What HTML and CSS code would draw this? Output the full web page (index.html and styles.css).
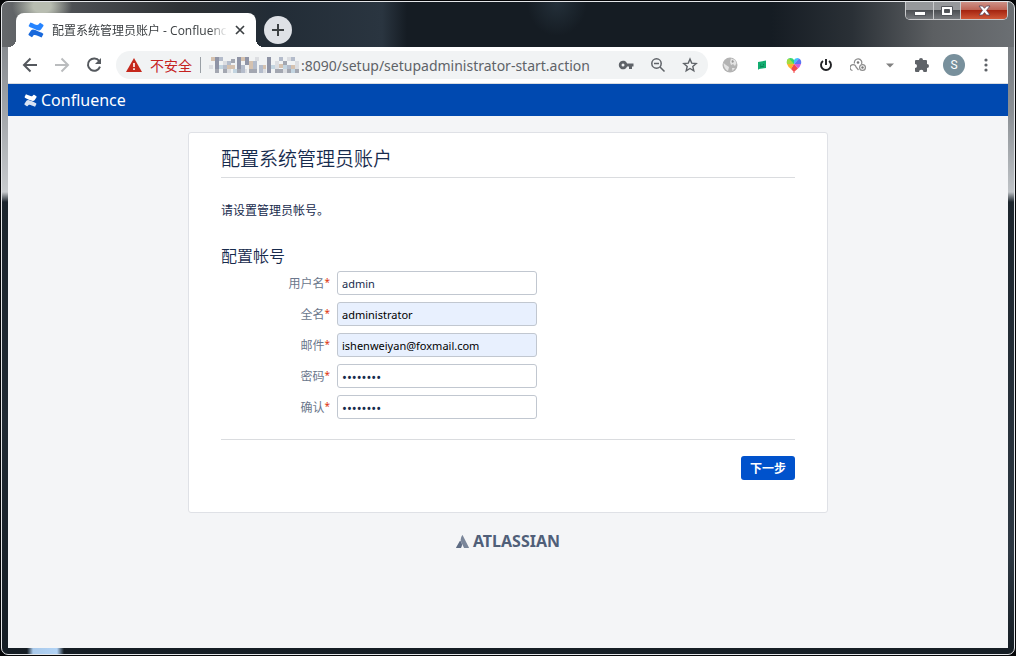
FILE: index.html
```html
<!DOCTYPE html>
<html lang="zh-CN">
<head>
<meta charset="utf-8">
<title>配置系统管理员账户 - Confluence</title>
<link rel="stylesheet" href="styles.css">
</head>
<body>
<div class="window">
  <header class="tabstrip">
    <div class="tab">
      <svg class="tab-icon" width="16" height="16" viewBox="0 0 16 16"><path fill="#1868db" d="M.6 12 3 8.400C5 6.500 7 8 12.500 10.300Q15.800 11.600 15.300 12.300L13.600 15.600C8.500 13.800 6.500 11.500 4.500 14.700Q4.100 15.400 3.500 15L.8 13.200Q.2 12.700.6 12Z"/><path fill="#2684ff" d="M15.400 4 13 7.600C11 9.500 9 8 3.500 5.700Q.2 4.400.7 3.700L2.400.4C7.500 2.200 9.500 4.500 11.500 1.300Q11.900.6 12.500 1L15.200 2.800Q15.800 3.300 15.400 4Z"/></svg>
      <span class="tab-title">配置系统管理员账户 - Confluence</span>
      <button class="tab-close" aria-label="关闭标签页"><svg width="10" height="10" viewBox="0 0 10 10"><path d="M1 1 9 9M9 1 1 9" stroke="#3c4043" stroke-width="1.700"/></svg></button>
    </div>
    <button class="new-tab" aria-label="新标签页"><svg width="12" height="12" viewBox="0 0 12 12"><path d="M6 0V12M0 6H12" stroke="#3c4043" stroke-width="2"/></svg></button>
    <div class="window-buttons">
      <button class="win-btn win-min" aria-label="最小化"><svg width="12" height="10" viewBox="0 0 12 10"><rect x=".5" y="5.500" width="11" height="4" fill="#fff" stroke="#53565c"/></svg></button>
      <button class="win-btn win-max" aria-label="最大化"><svg width="12" height="10" viewBox="0 0 12 10"><path fill="#fff" stroke="#53565c" fill-rule="evenodd" d="M.5.5H11.500V9.500H.5ZM3.500 3.500V6.500H8.500V3.500Z"/></svg></button>
      <button class="win-btn win-close" aria-label="关闭"><svg width="13" height="11" viewBox="0 0 13 11"><path fill="#fff" stroke="#53465c" stroke-width=".8" d="M1 1H4.500L6.500 3.300 8.500 1H12L8.500 5.400 12 10H8.500L6.500 7.600 4.500 10H1L4.500 5.400Z"/></svg></button>
    </div>
  </header>

  <nav class="toolbar">
    <div class="nav-buttons">
      <button class="icon-btn" aria-label="后退"><svg width="16" height="16" viewBox="0 0 16 16"><path d="M15 8H2M8.500 1.500 2 8 8.500 14.500" fill="none" stroke="#55595e" stroke-width="2"/></svg></button>
      <button class="icon-btn" aria-label="前进"><svg width="16" height="16" viewBox="0 0 16 16"><path d="M1 8H14M7.500 1.500 14 8 7.500 14.500" fill="none" stroke="#babcbe" stroke-width="2"/></svg></button>
      <button class="icon-btn" aria-label="重新加载"><svg width="16" height="16" viewBox="0 0 16 16"><path d="M13.200 4A6.200 6.200 0 1 0 14 9.700" fill="none" stroke="#55595e" stroke-width="2"/><path d="M15 1V7H9Z" fill="#55595e"/></svg></button>
    </div>
    <div class="omnibox">
      <svg class="warn" width="16" height="14" viewBox="0 0 16 14"><path d="M8 0 16 14H0Z" fill="#c5281c"/><path d="M7.200 5H8.800V9H7.200ZM7.200 10.300H8.800V12H7.200Z" fill="#fff"/></svg>
      <span class="insecure">不安全</span>
      <span class="separator"></span>
      <svg class="mosaic" width="92" height="18" viewBox="0 0 92 18" shape-rendering="crispEdges">
        <path fill="#dcdee2" d="M0 9h4v4H0zM14 5h4v4h-4zM18 13h4v4h-4zM34 13h4v4h-4zM46 1h4v4h-4zM54 13h3v4h-3zM66 5h4v8h-4zM78 1h4v4h-4zM74 13h4v4h-4zM86 5h4v8h-4z"/>
        <path fill="#8f94a6" d="M6 1h4v12H6zM28 1h4v12h-4zM36 1h4v8h-4zM58 1h4v16h-4z"/>
        <path fill="#b4bccb" d="M10 1h4v4h-4zM14 9h4v4h-4zM18 5h4v4h-4zM32 9h4v8h-4zM44 5h4v8h-4zM50 9h4v8h-4zM70 1h4v4h-4zM78 9h4v4h-4zM82 1h4v4h-4z"/>
        <path fill="#d5c2b0" d="M2 1h4v4H2zM18 9h8v4h-8zM32 1h4v4h-4zM40 5h4v8h-4zM54 9h3v4h-3zM70 8h4v4h-4zM82 9h4v4h-4z"/>
        <path fill="#a3a7b1" d="M6 13h4v4H6zM14 13h4v4h-4zM22 3h4v4h-4zM28 13h4v4h-4zM40 13h8v4h-8zM66 13h8v4h-8zM74 5h4v4h-4zM78 13h4v4h-4zM86 13h4v4h-4z"/>
        <path fill="#c3d5e1" d="M10 9h4v4h-4zM24 13h4v4h-4zM62 9h4v4h-4zM74 9h4v4h-4zM82 13h4v4h-4z"/>
      </svg>
      <input class="url" type="text" aria-label="地址" value=":8090/setup/setupadministrator-start.action">
      <div class="omni-icons">
        <button class="icon-btn" aria-label="密码"><svg width="16" height="16" viewBox="0 0 16 16"><path fill="#5f6368" fill-rule="evenodd" d="M9.100 6.500A4.300 4.300 0 1 0 9.100 9.500H11V12H14V9.500H15.500V6.500ZM5 6.500A1.500 1.500 0 1 1 5 9.500 1.500 1.500 0 0 1 5 6.500Z"/></svg></button>
        <button class="icon-btn" aria-label="缩放"><svg width="16" height="16" viewBox="0 0 16 16"><circle cx="6.500" cy="6.500" r="4.700" fill="none" stroke="#5f6368" stroke-width="1.500"/><path d="M10 10 14.500 14.500M4 6.500H9" stroke="#5f6368" stroke-width="1.500"/></svg></button>
        <button class="icon-btn" aria-label="加入书签"><svg width="16" height="16" viewBox="0 0 16 16"><path d="M8 2 9.700 6.100 14.200 6.500 10.800 9.400 11.800 13.800 8 11.500 4.200 13.800 5.200 9.400 1.800 6.500 6.300 6.100Z" fill="none" stroke="#5f6368" stroke-width="1.400"/></svg></button>
      </div>
    </div>
    <div class="extensions">
      <button class="icon-btn" aria-label="代理"><svg width="16" height="16" viewBox="0 0 16 16"><circle cx="8" cy="8" r="7.500" fill="#b3b3b3"/><path fill="#e4e4e4" d="M9 1.500 13 3 14.500 6 13 9 11 7 9 8 8 5ZM1.500 6 4 8 7 10 6 14Q2 12 1.500 6ZM10 11 13 11 10.500 14Z"/><path fill="#979797" d="M10 3 12 4 11 6 9.500 5Z"/></svg></button>
      <button class="icon-btn" aria-label="扩展"><svg width="16" height="16" viewBox="0 0 16 16"><path fill="#12ad70" d="M4 5 12 3.500V11L5 12 4 13Z"/><path stroke="#087f50" d="M6 8H7M9 7.500H10M6 10 10 9"/></svg></button>
      <button class="icon-btn" aria-label="颜色"><svg width="16" height="16" viewBox="0 0 16 16"><path fill="#39d66b" d="M8 7 1 7Q0 1 4.500 1 7 1 8 3Z"/><path fill="#3ec3ff" d="M8 7V3Q9 1 12 1L13 1.500Z"/><path fill="#5a75f4" d="M8 7 13 1.500Q16 3 15 7Z"/><path fill="#d461d7" d="M8 7H15Q14 10 12 11.500Z"/><path fill="#ffb22b" d="M8 7H1Q2 10 5 12Z"/><path fill="#a6dc3f" d="M8 7 3 1.500Q0 3 1 7Z"/><path fill="#f34b4b" d="M8 7 5 12 7.500 14.500V16H8.500V14.500L12 11.500Z"/></svg></button>
      <button class="icon-btn" aria-label="开关"><svg width="16" height="16" viewBox="0 0 16 16"><path d="M5 4A5 5 0 1 0 11 4M8 2V8" fill="none" stroke="#202124" stroke-width="1.900"/></svg></button>
      <button class="icon-btn" aria-label="链接"><svg width="16" height="16" viewBox="0 0 16 16"><g fill="none" stroke="#8c8c8c" stroke-width="1.200"><path d="M4.500 6.500A3.700 3.700 0 1 1 11.500 7M2.500 13.500A3 3 0 1 1 6 10L8.500 13"/><circle cx="12.500" cy="10.500" r="2.900"/></g><g fill="#777"><circle cx="8" cy="5.500" r="1.300"/><circle cx="12.500" cy="10.500" r="1.200"/></g></svg></button>
      <button class="icon-btn" aria-label="更多"><svg width="16" height="16" viewBox="0 0 16 16"><path d="M4 6.500H12L8 10.500Z" fill="#808080"/></svg></button>
      <button class="icon-btn" aria-label="扩展程序"><svg width="16" height="16" viewBox="0 0 16 16"><path fill="#5f6368" d="M1 4Q1 3 2 3H5A2 2 0 1 1 9 3H12Q13 3 13 4V7A2 2 0 1 1 13 11V14Q13 15 12 15H9.500A2 2 0 1 0 5 15H2Q1 15 1 14V11A2 2 0 1 0 1 7Z"/></svg></button>
      <button class="avatar" aria-label="个人资料">S</button>
      <button class="icon-btn" aria-label="菜单"><svg width="16" height="16" viewBox="0 0 16 16"><g fill="#5f6368"><circle cx="8" cy="3" r="1.600"/><circle cx="8" cy="8" r="1.600"/><circle cx="8" cy="13" r="1.600"/></g></svg></button>
    </div>
  </nav>

  <div class="page">
    <header class="app-header">
      <a class="brand" href="#"><svg width="13" height="13" viewBox="0 0 16 16"><path fill="#fff" opacity=".85" d="M.6 12 3 8.400C5 6.500 7 8 12.500 10.300Q15.800 11.600 15.300 12.300L13.600 15.600C8.500 13.800 6.500 11.500 4.500 14.700Q4.100 15.400 3.500 15L.8 13.200Q.2 12.700.6 12Z"/><path fill="#fff" d="M15.400 4 13 7.600C11 9.500 9 8 3.500 5.700Q.2 4.400.7 3.700L2.400.4C7.500 2.200 9.500 4.500 11.500 1.300Q11.900.6 12.500 1L15.200 2.800Q15.800 3.300 15.400 4Z"/></svg><span>Confluence</span></a>
    </header>
    <main class="card">
      <h1 class="title">配置系统管理员账户</h1>
      <p class="intro">请设置管理员帐号。</p>
      <form class="form">
        <h2 class="subtitle">配置帐号</h2>
        <div class="field"><label class="label" for="username">用户名<span class="required">*</span></label><input class="input" id="username" type="text" value="admin"></div>
        <div class="field"><label class="label" for="fullname">全名<span class="required">*</span></label><input class="input filled" id="fullname" type="text" value="administrator"></div>
        <div class="field"><label class="label" for="email">邮件<span class="required">*</span></label><input class="input filled" id="email" type="email" value="ishenweiyan@foxmail.com"></div>
        <div class="field"><label class="label" for="password">密码<span class="required">*</span></label><input class="input password" id="password" type="password" value="password"></div>
        <div class="field"><label class="label" for="confirm">确认<span class="required">*</span></label><input class="input password" id="confirm" type="password" value="password"></div>
        <div class="actions"><button class="submit" type="button">下一步</button></div>
      </form>
    </main>
    <footer class="footer">
      <a class="atlassian" href="#"><svg width="13" height="13" viewBox="0 0 13 13"><path fill="#5e6c84" d="M3.800 6Q4.200 5.600 4.500 6.100 7.300 9.300 5 13H.3Q-.1 12.900.1 12.400Z"/><path fill="#7a869a" d="M6.200.3Q6.500-.1 6.800.4L12.900 12.400Q13.100 12.900 12.600 13H8.500Q8 13 7.800 12.500L5.400 7.500Q3.600 4 6.200.3Z"/></svg><span>ATLASSIAN</span></a>
    </footer>
  </div>
</div>
</body>
</html>
```
FILE: styles.css
```css
* { box-sizing: border-box; }

body {
  margin: 0;
  min-height: 100vh;
  padding: 1px;
  display: flex;
  background: #050608;
  font-family: "Noto Sans", "Noto Sans CJK SC", sans-serif;
  font-size: 12px;
  color: #172b4d;
}

button {
  margin: 0;
  padding: 0;
  border: 0;
  background: none;
  font: inherit;
}

svg { display: block; }
a { color: inherit; text-decoration: none; }

.window {
  flex: 1;
  min-width: 0;
  display: flex;
  flex-direction: column;
  padding: 0 6px 6px;
  border: 1px solid #e4e6e9;
  border-radius: 7px;
  background:
    linear-gradient(90deg, transparent 25px, #a9c9ea 31px, #b2d3f5 55px, transparent 62px) 0 100% / 100% 6px no-repeat,
    radial-gradient(ellipse 30px 22px at 40px 4px, #b8bdb1 30%, transparent) 0 0 / 100% 45px no-repeat,
    radial-gradient(ellipse 30px 34px at 555px 0, #24303a, transparent) 0 0 / 100% 45px no-repeat,
    linear-gradient(90deg, #65686b 0, #46494d 90px, #2d3134 180px, #222c36 270px, #2a3540 380px, #151c23 405px, #151c23 76%, #2a3036 84%, #5c5f62 92%, #6b6f73) 0 0 / 100% 45px no-repeat,
    linear-gradient(#777b80 0, #a1a5a9 110px, #c8cbce 190px, #1c252d 200px, #202a33 420px, #151d24) 0 0 / 50% 100% no-repeat,
    linear-gradient(#6b6f73 0, #8b9095 110px, #bfc3c7 190px, #1c252d 200px, #2d3843 550px, #151d24) 100% 0 / 50% 100% no-repeat;
}

.tabstrip {
  height: 45px;
  display: flex;
  align-items: flex-end;
  padding-left: 8px;
}

.tab {
  position: relative;
  width: 240px;
  height: 34px;
  display: flex;
  align-items: center;
  gap: 8px;
  padding: 0 11px 0 12px;
  border-radius: 8px 8px 0 0;
  background: #fff;
}

.tab::before,
.tab::after {
  content: "";
  position: absolute;
  bottom: 0;
  width: 8px;
  height: 8px;
}

.tab::before {
  right: 100%;
  background: radial-gradient(circle at 0 0, transparent 8px, #fff 8px);
}

.tab::after {
  left: 100%;
  background: radial-gradient(circle at 100% 0, transparent 8px, #fff 8px);
}

.tab-title {
  flex: 1;
  overflow: hidden;
  white-space: nowrap;
  color: #3c4043;
  font-family: "Open Sans", "Noto Sans CJK SC", sans-serif;
  mask-image: linear-gradient(90deg, #000 90%, transparent);
}

.new-tab {
  width: 28px;
  height: 28px;
  display: grid;
  place-items: center;
  margin: 0 0 3px 8px;
  border-radius: 50%;
  background: #dee1e6;
}

.window-buttons {
  align-self: flex-start;
  display: flex;
  margin-left: auto;
  border: 1px solid #c9cacc;
  border-top: 0;
  border-radius: 0 0 5px 5px;
  overflow: hidden;
}

.win-btn {
  width: 28px;
  height: 17px;
  display: grid;
  place-items: center;
  border-right: 1px solid #c9cacc;
  background: linear-gradient(#96989b 45%, #4c4f53 50%, #777a7e);
}

.win-max { width: 27px; }

.win-close {
  width: 46px;
  border-right: 0;
  background: linear-gradient(#cd9187 0, #bd6556 45%, #a52511 50%, #cf5737);
}

.toolbar {
  height: 37px;
  display: flex;
  align-items: center;
  padding: 0 14px;
  border-bottom: 1px solid #d9dce0;
  background: #fff;
}

.nav-buttons {
  display: flex;
  gap: 16px;
  margin-right: 14px;
}

.icon-btn {
  width: 16px;
  height: 16px;
}

.omnibox {
  flex: 1;
  min-width: 0;
  height: 28px;
  display: flex;
  align-items: center;
  padding: 0 10px;
  border-radius: 14px;
  background: #f1f3f4;
  font-size: 14px;
}

.insecure {
  margin: 0 8px;
  color: #c5221f;
}

.separator {
  width: 1px;
  height: 16px;
  margin-right: 8px;
  background: #9aa0a6;
}

.url {
  flex: 1;
  min-width: 0;
  padding: 0;
  border: 0;
  background: none;
  color: #5f6368;
  font-family: "Noto Sans", sans-serif;
  font-size: 14px;
}

.omni-icons,
.extensions {
  display: flex;
  align-items: center;
  gap: 16px;
}

.extensions { margin-left: 14px; }

.avatar {
  width: 22px;
  height: 22px;
  margin: 0 -3px;
  border-radius: 50%;
  background: #78909c;
  color: #fff;
  font-family: Roboto, sans-serif;
}

.page {
  flex: 1;
  background: #f4f5f7;
}

.app-header {
  height: 32px;
  display: flex;
  align-items: center;
  padding: 0 16px;
  background: #0049b0;
  color: #fff;
}

.brand {
  display: flex;
  align-items: center;
  gap: 4px;
  font-size: 16px;
  line-height: 20px;
}

.card {
  max-width: 640px;
  margin: 16px auto 0;
  padding: 8px 32px 32px;
  border: 1px solid #dfe1e6;
  border-radius: 3px;
  background: #fff;
}

.title {
  margin: 0;
  border-bottom: 1px solid #dadcdf;
  font-size: 19px;
  font-weight: 350;
  line-height: 36px;
}

.intro {
  margin: 23px 0 0;
  line-height: 20px;
}

.subtitle {
  margin: 24px 0 4px;
  font-size: 16px;
  font-weight: 350;
  line-height: 22px;
}

.field {
  display: flex;
  align-items: center;
  margin-bottom: 7px;
}

.label {
  width: 109px;
  margin-right: 7px;
  padding-top: 2px;
  color: #6b778c;
  line-height: 20px;
  text-align: right;
}

.required {
  color: #de350b;
  font-size: 10px;
  line-height: 10px;
  vertical-align: 2px;
}

.input {
  width: 200px;
  height: 24px;
  padding: 1px 4px 0;
  border: 1px solid #c1c7d0;
  border-radius: 3px;
  background: #fff;
  color: #172b4d;
  font-family: "Noto Sans", sans-serif;
  font-size: 11px;
}

.password { font-size: 13px; }

.filled {
  background: #e8f0fe;
  color: #000;
}

.actions {
  display: flex;
  justify-content: flex-end;
  margin-top: 20px;
  padding-top: 16px;
  border-top: 1px solid #dadcdf;
}

.submit {
  height: 24px;
  padding: 0 9px;
  border-radius: 3px;
  background: #0052cc;
  color: #fff;
  font-weight: 700;
}

.footer {
  display: flex;
  justify-content: center;
  padding: 16px;
}

.atlassian {
  display: flex;
  align-items: center;
  gap: 4px;
  color: #505f79;
  font-size: 16px;
  font-weight: 700;
  line-height: 24px;
}
```
